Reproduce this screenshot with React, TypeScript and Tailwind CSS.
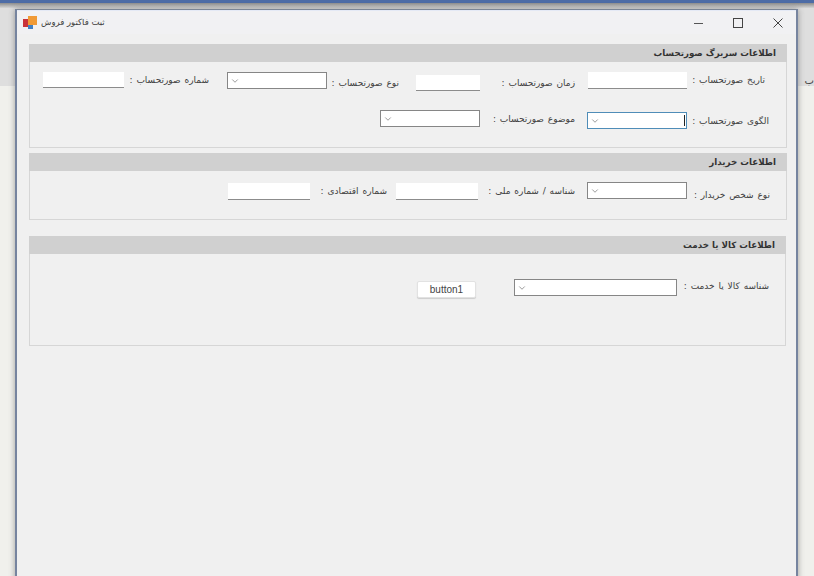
import type { ReactNode } from "react";
import { ChevronDown } from "lucide-react";

function Label({ className, children }: { className: string; children: ReactNode }) {
  return <div className={`shrink-0 text-[9px] leading-[14px] [word-spacing:1px] whitespace-nowrap text-[#404040] ${className}`}>{children}</div>;
}

function TextBox({ className }: { className: string }) {
  return <div className={`shrink-0 bg-white border-b border-[#8c8c8c] ${className}`} />;
}

function Combo({ className, focused }: { className: string; focused?: boolean }) {
  return (
    <div className={`shrink-0 h-[17px] flex items-center justify-between bg-white border ${focused ? "border-[#4f8db8]" : "border-[#868686]"} ${className}`}>
      {focused ? <div className="w-px h-[11px] mr-[1px] bg-[#222]" /> : <div />}
      <ChevronDown size={10} strokeWidth={1.4} className="ml-[2px] text-[#555]" />
    </div>
  );
}

function Panel({ title, className, children }: { title: string; className: string; children: ReactNode }) {
  return (
    <div className={`border-x border-b border-[#d6d6d6] ${className}`}>
      <div className="h-[18px] -mx-px bg-[#d0d0d0] pr-[11px] text-[8.7px] leading-[18px] font-bold text-[#333]">{title}</div>
      {children}
    </div>
  );
}

function Logo() {
  return (
    <svg width="14" height="14" viewBox="0 0 14 14" className="shrink-0">
      <rect x="5" y="0" width="9" height="9" fill="#f09a36" />
      <rect x="0" y="3" width="5" height="8" fill="#c9333a" />
      <rect x="5" y="9" width="5" height="4" fill="#3f7fc4" />
    </svg>
  );
}

export default function App() {
  return (
    <div dir="rtl" className="relative h-[576px] w-[814px] overflow-hidden bg-[#f0f0ec] font-['DejaVu_Sans',sans-serif]">
      <div className="h-[3px] bg-[#4d6ca6]" />
      <div className="h-[5px] bg-gradient-to-b from-[#8d8d8d] to-[#d6d6d6]" />
      <div className="h-[78px] bg-[#dedede]">
        <div className="pt-[66px] text-[10px] leading-[14px] text-[#444]">ب</div>
      </div>

      {/* window */}
      <div className="absolute left-[15px] top-[9px] w-[783px] h-[580px] bg-[#f0f0f0] border-t border-t-[#7c8696] border-x-2 border-x-[#76849f] shadow-[0_0_6px_rgba(60,60,60,0.45)]">
        <div dir="ltr" className="h-[24px] flex items-center bg-[#f1f1f3] border-t border-[#e4e9f5] pl-[6px]">
          <Logo />
          <div dir="rtl" className="ml-[4px] text-[8.5px] text-[#404040]">ثبت فاکتور فروش</div>
          <div className="ml-auto flex items-center">
            <svg width="12" height="12" viewBox="0 0 12 12" className="mr-[27px]"><path d="M1 6.5H10" stroke="#555" /></svg>
            <svg width="12" height="12" viewBox="0 0 12 12" className="mr-[28px]"><rect x="1.5" y="1.5" width="9" height="9" fill="none" stroke="#444" /></svg>
            <svg width="12" height="12" viewBox="0 0 12 12" className="mr-[12px]"><path d="M1.5 1.5L10.5 10.5M10.5 1.5L1.5 10.5" stroke="#444" /></svg>
          </div>
        </div>

        <div className="pt-[10px] pr-[9px]">
          <Panel title="اطلاعات سربرگ صورتحساب" className="w-[758px] h-[104px]">
            <div className="flex items-start pt-[10px] pr-[21px]">
              <Label className="w-[78px] mt-[1px]">تاریخ صورتحساب :</Label>
              <TextBox className="w-[99px] h-[17px]" />
              <Label className="w-[95px] mr-[13px] mt-[4px]">زمان صورتحساب :</Label>
              <TextBox className="w-[64px] h-[16px] mt-[3px]" />
              <Label className="w-[72px] mr-[17px] mt-[4px]">نوع صورتحساب :</Label>
              <Combo className="w-[100px]" />
              <Label className="w-[85px] mr-[18px] mt-[1px]">شماره صورتحساب :</Label>
              <TextBox className="w-[81px] h-[16px]" />
            </div>
            <div className="flex items-start mt-[19px] pr-[17px]">
              <Label className="w-[82px] mt-[4px]">الگوی صورتحساب :</Label>
              <Combo focused className="w-[100px] mt-[2px]" />
              <Label className="w-[95px] mr-[12px] mt-[2px]">موضوع صورتحساب :</Label>
              <Combo className="w-[100px]" />
            </div>
          </Panel>

          <Panel title="اطلاعات خریدار" className="w-[758px] h-[67px] mt-[5px]">
            <div className="flex items-start pt-[11px] pr-[16px]">
              <Label className="w-[83px] mt-[6px]">نوع شخص خریدار :</Label>
              <Combo className="w-[100px]" />
              <Label className="w-[97px] mr-[12px] mt-[2px]">شناسه / شماره ملی :</Label>
              <TextBox className="w-[82px] h-[17px] mt-[1px]" />
              <Label className="w-[77px] mr-[9px] mt-[2px]">شماره اقتصادی :</Label>
              <TextBox className="w-[82px] h-[17px] mt-[1px]" />
            </div>
          </Panel>

          <Panel title="اطلاعات کالا یا خدمت" className="w-[757px] h-[110px] mt-[16px] mr-[1px]">
            <div className="flex items-start pt-[25px] pr-[16px]">
              <Label className="w-[92px]">شناسه کالا یا خدمت :</Label>
              <Combo className="w-[163px]" />
              <button dir="ltr" className="w-[59px] h-[17px] mr-[38px] mt-[2px] bg-white border border-[#e2e2e2] rounded-[2px] shadow-[0_1px_1px_rgba(0,0,0,0.15)] font-['Liberation_Sans',sans-serif] text-[10px] leading-[14px] text-[#444]">
                button1
              </button>
            </div>
          </Panel>
        </div>
      </div>
    </div>
  );
}
